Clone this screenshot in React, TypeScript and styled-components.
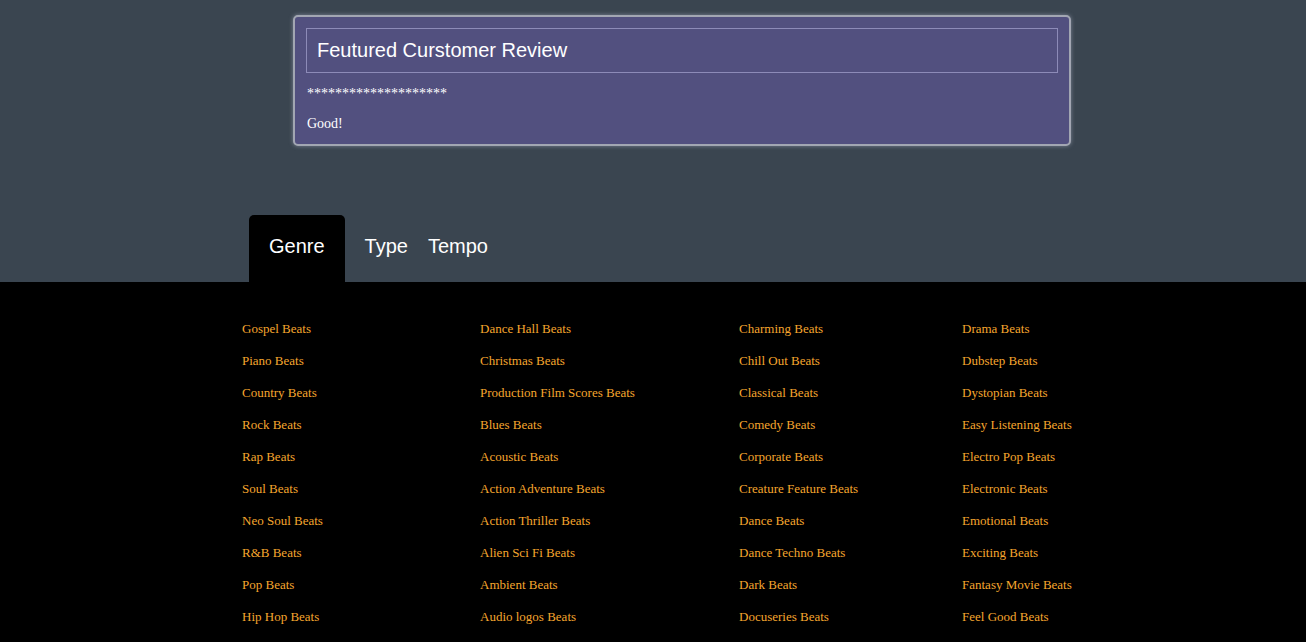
import React, { useState } from 'react';
import styled, { createGlobalStyle } from 'styled-components';

const GlobalStyle = createGlobalStyle`
  html, body {
    margin: 0;
    padding: 0;
    background-color: #3a4550;
  }
  * {
    box-sizing: border-box;
  }
`;

const Page = styled.div`
  display: flex;
  flex-direction: column;
  min-height: 100vh;
`;

const Header = styled.header`
  background-color: #3a4550;
  padding-top: 15px;
`;

const ReviewCard = styled.section`
  margin-left: 293px;
  width: 778px;
  background-color: #52507f;
  border: 2px solid #a2a6b2;
  border-radius: 5px;
  box-shadow: 0 0 4px rgba(190, 195, 215, 0.5);
  padding: 11px 11px 12px;
`;

const ReviewTitle = styled.div`
  height: 45px;
  border: 1px solid #8d8bb8;
  padding: 0 10px;
  display: flex;
  align-items: center;
  font-family: 'Liberation Sans', Arial, sans-serif;
  font-size: 20px;
  color: #ffffff;
`;

const Stars = styled.div`
  margin-top: 13px;
  padding-left: 1px;
  font-family: 'Liberation Serif', 'Times New Roman', serif;
  font-size: 14px;
  line-height: 16px;
  color: #ffffff;
`;

const ReviewText = styled.p`
  margin: 14px 0 0;
  padding-left: 1px;
  font-family: 'Liberation Serif', 'Times New Roman', serif;
  font-size: 14px;
  line-height: 16px;
  color: #ffffff;
`;

const TabList = styled.nav`
  display: flex;
  margin-top: 69px;
  padding-left: 249px;
  height: 67px;
`;

const Tab = styled.button<{ $active?: boolean }>`
  display: flex;
  align-items: center;
  height: 100%;
  padding: ${p => (p.$active ? '0 20px 4px' : '0 10px 4px')};
  margin-right: ${p => (p.$active ? '10px' : '0')};
  background: ${p => (p.$active ? '#000000' : 'transparent')};
  border: none;
  border-radius: 5px 5px 0 0;
  font-family: 'Liberation Sans', Arial, sans-serif;
  font-size: 20px;
  color: #ffffff;
  cursor: pointer;
`;

const Links = styled.main`
  flex: 1;
  background-color: #000000;
  padding: 31px 0 20px 242px;
  display: grid;
  grid-template-columns: 238px 259px 223px auto;
  grid-template-rows: repeat(10, 32px);
  grid-auto-flow: column;
`;

const LinkItem = styled.a`
  font-family: 'Liberation Serif', 'Times New Roman', serif;
  font-size: 13px;
  line-height: 32px;
  color: #f5a62e;
  text-decoration: none;
  white-space: nowrap;
`;

const genreBeats = [
  'Gospel Beats', 'Piano Beats', 'Country Beats', 'Rock Beats', 'Rap Beats',
  'Soul Beats', 'Neo Soul Beats', 'R&B Beats', 'Pop Beats', 'Hip Hop Beats',
  'Dance Hall Beats', 'Christmas Beats', 'Production Film Scores Beats', 'Blues Beats', 'Acoustic Beats',
  'Action Adventure Beats', 'Action Thriller Beats', 'Alien Sci Fi Beats', 'Ambient Beats', 'Audio logos Beats',
  'Charming Beats', 'Chill Out Beats', 'Classical Beats', 'Comedy Beats', 'Corporate Beats',
  'Creature Feature Beats', 'Dance Beats', 'Dance Techno Beats', 'Dark Beats', 'Docuseries Beats',
  'Drama Beats', 'Dubstep Beats', 'Dystopian Beats', 'Easy Listening Beats', 'Electro Pop Beats',
  'Electronic Beats', 'Emotional Beats', 'Exciting Beats', 'Fantasy Movie Beats', 'Feel Good Beats',
];

const tabs = ['Genre', 'Type', 'Tempo'];

const App: React.FC = () => {
  const [activeTab, setActiveTab] = useState('Genre');

  return (
    <Page>
      <GlobalStyle />
      <Header>
        <ReviewCard>
          <ReviewTitle>Feutured Curstomer Review</ReviewTitle>
          <Stars>********************</Stars>
          <ReviewText>Good!</ReviewText>
        </ReviewCard>
        <TabList>
          {tabs.map(tab => (
            <Tab key={tab} $active={tab === activeTab} onClick={() => setActiveTab(tab)}>
              {tab}
            </Tab>
          ))}
        </TabList>
      </Header>
      <Links>
        {genreBeats.map(name => (
          <LinkItem key={name} href="#">{name}</LinkItem>
        ))}
      </Links>
    </Page>
  );
};

export default App;
